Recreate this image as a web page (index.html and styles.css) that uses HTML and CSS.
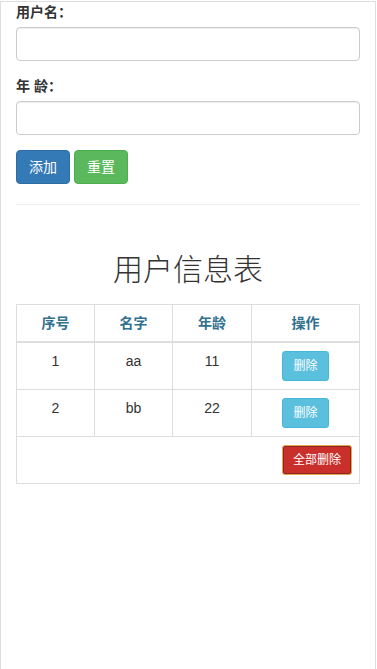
FILE: index.html
```html
<!DOCTYPE html>
<html lang="zh-CN">
<head>
<meta charset="utf-8">
<title>用户信息表</title>
<link rel="stylesheet" href="styles.css">
</head>
<body>
<div class="page">
  <form class="user-form">
    <div class="form-group">
      <label class="label">用户名：</label>
      <input class="input" type="text">
    </div>
    <div class="form-group">
      <label class="label">年 龄：</label>
      <input class="input" type="text">
    </div>
    <div class="actions">
      <button type="button" class="btn btn-primary">添加</button>
      <button type="button" class="btn btn-success">重置</button>
    </div>
  </form>
  <hr class="divider">
  <h2 class="title">用户信息表</h2>
  <table class="table">
    <colgroup>
      <col class="c1"><col class="c2"><col class="c3"><col class="c4">
    </colgroup>
    <thead>
      <tr><th>序号</th><th>名字</th><th>年龄</th><th>操作</th></tr>
    </thead>
    <tbody>
      <tr><td>1</td><td>aa</td><td>11</td><td><button type="button" class="btn btn-sm btn-info">删除</button></td></tr>
      <tr><td>2</td><td>bb</td><td>22</td><td><button type="button" class="btn btn-sm btn-info">删除</button></td></tr>
      <tr><td colspan="4" class="right"><button type="button" class="btn btn-sm btn-danger">全部删除</button></td></tr>
    </tbody>
  </table>
</div>
</body>
</html>
```
FILE: styles.css
```css
* { box-sizing: border-box; }
html, body {
  margin: 0;
  padding: 0;
  background: #fff;
}
body {
  font-family: "Liberation Sans", "Noto Sans CJK SC", Arial, sans-serif;
  font-size: 14px;
  line-height: 20px;
  color: #333;
}
.page {
  width: 376px;
  min-height: 668px;
  margin-top: 1px;
  border: 1px solid #ddd;
  border-bottom: 0;
  padding: 0 15px;
}
.user-form { margin: 0; }
.form-group { margin-bottom: 15px; }
.label {
  display: inline-block;
  font-weight: bold;
  margin-bottom: 5px;
  max-width: 100%;
}
.input {
  display: block;
  width: 100%;
  height: 34px;
  padding: 6px 12px;
  font: inherit;
  color: #555;
  background: #fff;
  border: 1px solid #ccc;
  border-radius: 4px;
  box-shadow: inset 0 1px 1px rgba(0,0,0,.075);
}
.actions {
  display: flex;
  gap: 4px;
}
.btn {
  display: inline-block;
  padding: 6px 12px;
  font-family: inherit;
  font-size: 14px;
  line-height: 20px;
  border: 1px solid transparent;
  border-radius: 4px;
  color: #fff;
  cursor: pointer;
  text-align: center;
  white-space: nowrap;
}
.btn-primary { background: #337ab7; border-color: #2e6da4; }
.btn-success { background: #5cb85c; border-color: #4cae4c; }
.btn-sm {
  padding: 5px 10px;
  font-size: 12px;
  line-height: 18px;
  border-radius: 3px;
}
.btn-info { background: #5bc0de; border-color: #46b8da; }
.btn-danger {
  background: #c9302c;
  border-color: #e3a84a;
  box-shadow: inset 0 0 0 1px #8f2320;
}
.divider {
  margin: 20px 0;
  border: 0;
  border-top: 1px solid #eee;
  height: 0;
}
.title {
  margin: 48px 0 18px;
  text-align: center;
  font-size: 30px;
  line-height: 33px;
  font-weight: 300;
  color: #333;
}
.table {
  width: 100%;
  border-collapse: collapse;
  border: 1px solid #ddd;
  table-layout: fixed;
}
.c1 { width: 78px; }
.c2 { width: 78px; }
.c3 { width: 79px; }
.table th, .table td {
  border: 1px solid #ddd;
  padding: 8px;
  text-align: center;
  vertical-align: top;
  line-height: 20px;
}
.table th {
  font-weight: bold;
  color: #31708f;
  border-bottom-width: 2px;
}
.table td.right { text-align: right; padding-right: 7px; }
```
